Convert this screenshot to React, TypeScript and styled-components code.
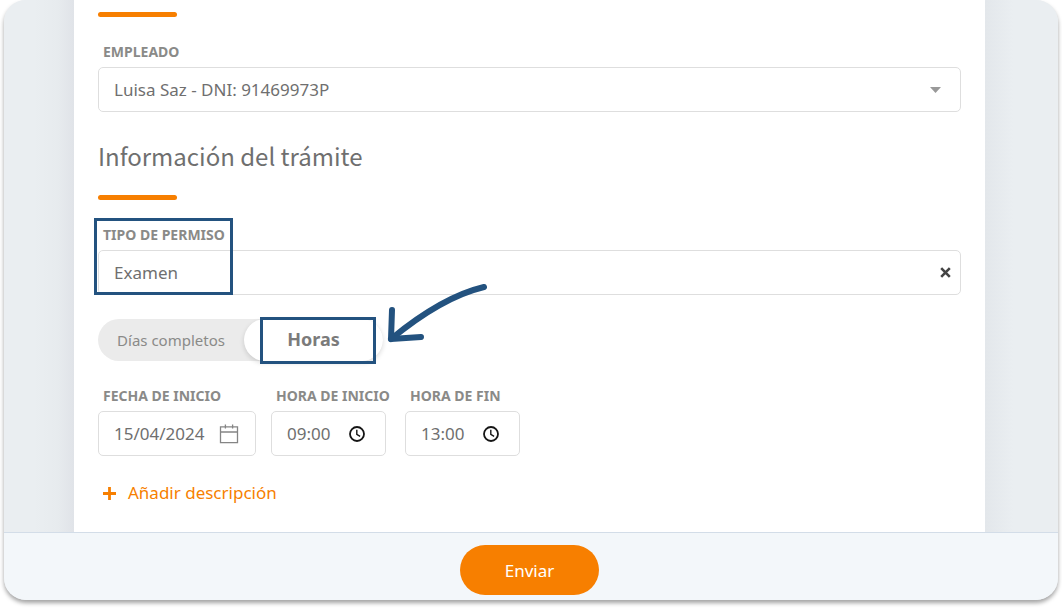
import React, { useState } from "react";
import styled, { createGlobalStyle } from "styled-components";

const ORANGE = "#f77f00";
const NAVY = "#23527f";
const LABEL = "#8a8a88";
const TEXT = "#6f6f6f";
const BORDER = "#dedede";

const GlobalStyle = createGlobalStyle`
  *, *::before, *::after { box-sizing: border-box; }
  body {
    margin: 0;
    background: #fff;
    color: ${TEXT};
    font-family: "Noto Sans", "Open Sans", sans-serif;
    font-size: 17px;
  }
  button, input, select { font: inherit; color: inherit; margin: 0; }
`;

const Frame = styled.div`
  margin: 0 4px 8px;
  border-radius: 22px;
  overflow: hidden;
  background: #eaeef1;
  box-shadow: 0 3px 4px rgba(0, 0, 0, 0.36);
`;

const Backdrop = styled.div`
  padding: 0 73px 0 70px;
  background: linear-gradient(
    to right,
    #eaeef1 30px,
    #e7ebee 54px,
    #e0e3e8 70px,
    #e3e7eb calc(100% - 73px),
    #eaeef1 calc(100% - 45px)
  );
`;

const Sheet = styled.main`
  padding: 12px 24px 27px;
  background: #fff;
`;

const Form = styled.form`
  margin: 0;
`;

const Bar = styled.div`
  width: 79px;
  height: 5px;
  border-radius: 3px;
  background: ${ORANGE};
`;

const Heading = styled.h2`
  margin: 26px 0 21px;
  font-family: "Noto Sans CJK SC", "Noto Sans", sans-serif;
  font-size: 24px;
  font-weight: 400;
  line-height: 36px;
`;

const Field = styled.div`
  position: relative;
  display: flex;
  flex-direction: column;
  gap: 4px;
  margin-top: 24px;
`;

const Label = styled.label`
  padding-left: 5px;
  color: ${LABEL};
  font-size: 14px;
  font-weight: 700;
  line-height: 22px;
  white-space: nowrap;
`;

const Control = styled.div<{ $width?: number; $end?: number }>`
  display: flex;
  align-items: center;
  width: ${(p) => (p.$width ? `${p.$width}px` : "100%")};
  height: 45px;
  padding: 0 ${(p) => p.$end ?? 16}px 0 15px;
  border: 1px solid ${BORDER};
  border-radius: 5px;
  background: #fff;
`;

const Select = styled.select`
  flex: 1;
  min-width: 0;
  height: 100%;
  padding: 0;
  border: 0;
  outline: 0;
  background: transparent;
  appearance: none;
`;

const TextInput = styled.input`
  flex: 1;
  min-width: 0;
  height: 100%;
  padding: 0;
  border: 0;
  outline: 0;
  background: transparent;
`;

const IconButton = styled.button`
  display: flex;
  padding: 0;
  border: 0;
  background: none;
  cursor: pointer;
`;

const Toggle = styled.div`
  position: relative;
  display: flex;
  width: 285px;
  height: 42px;
  margin-top: 24px;
  border-radius: 21px;
  background: #ebebeb;
`;

const HiddenRadio = styled.input`
  position: absolute;
  opacity: 0;
`;

const Option = styled.label<{ $active: boolean }>`
  display: flex;
  flex: ${(p) => (p.$active ? "0 0 139px" : "1")};
  align-items: center;
  justify-content: center;
  padding-bottom: ${(p) => (p.$active ? 3 : 0)}px;
  border-radius: 21px;
  background: ${(p) => (p.$active ? "#fff" : "transparent")};
  box-shadow: ${(p) => (p.$active ? "0 2px 5px rgba(0, 0, 0, 0.14)" : "none")};
  color: ${(p) => (p.$active ? "#7b7b7b" : LABEL)};
  font-size: ${(p) => (p.$active ? 18 : 15)}px;
  font-weight: ${(p) => (p.$active ? 700 : 400)};
  cursor: pointer;
`;

const TimeRow = styled.div`
  display: grid;
  grid-template-columns: 158px 119px 115px;
  gap: 15px;
`;

const AddLink = styled.button`
  display: flex;
  align-items: center;
  gap: 12px;
  margin-top: 25px;
  padding: 0 0 0 5px;
  border: 0;
  background: none;
  color: ${ORANGE};
  line-height: 24px;
  cursor: pointer;
`;

const Footer = styled.footer`
  display: flex;
  justify-content: center;
  padding: 12px 3px 5px 0;
  border-top: 1px solid #d3dde8;
  background: #f3f7fa;
`;

const Submit = styled.button`
  width: 139px;
  height: 50px;
  border: 0;
  border-radius: 25px;
  background: ${ORANGE};
  color: #fff;
  cursor: pointer;
`;

const Highlight = styled.span<{ $left: number; $top: number; $width: number; $height: number }>`
  position: absolute;
  left: ${(p) => p.$left}px;
  top: ${(p) => p.$top}px;
  width: ${(p) => p.$width}px;
  height: ${(p) => p.$height}px;
  border: 3px solid ${NAVY};
  pointer-events: none;
`;

const Arrow = styled.svg`
  position: absolute;
  left: 287px;
  top: -39px;
  pointer-events: none;
`;

const CalendarIcon = () => (
  <svg width="20" height="20" viewBox="0 0 20 20" fill="none" stroke="#858585" strokeWidth="1.3">
    <path d="M1.5 2.8h17v15.9h-17zM1.5 8h17M6.4 .5v4M13.6 .5v4" />
  </svg>
);

const ClockIcon = () => (
  <svg width="16" height="16" viewBox="0 0 16 16" fill="none" stroke="#151515">
    <circle cx="8" cy="8" r="7" strokeWidth="1.8" />
    <path d="M7.8 3.8v4.5l3.3 2" strokeWidth="1.4" />
  </svg>
);

type TimeFieldProps = { id: string; label: string; initial: string };

const TimeField = ({ id, label, initial }: TimeFieldProps) => (
  <Field>
    <Label htmlFor={id}>{label}</Label>
    <Control $width={115} $end={20}>
      <TextInput id={id} defaultValue={initial} />
      <IconButton type="button" aria-label={`Elegir ${label.toLowerCase()}`}>
        <ClockIcon />
      </IconButton>
    </Control>
  </Field>
);

export default function App() {
  const [mode, setMode] = useState("horas");
  const [permit, setPermit] = useState("Examen");

  return (
    <>
      <GlobalStyle />
      <Frame>
        <Backdrop>
          <Sheet>
            <Form id="tramite" onSubmit={(e) => e.preventDefault()}>
              <Bar />
              <Field>
                <Label htmlFor="empleado">EMPLEADO</Label>
                <Control $end={19}>
                  <Select id="empleado">
                    <option>Luisa Saz - DNI: 91469973P</option>
                  </Select>
                  <svg width="11" height="6" viewBox="0 0 11 6">
                    <path d="M0 0h11L5.5 6z" fill="#999" />
                  </svg>
                </Control>
              </Field>

              <Heading>Información del trámite</Heading>
              <Bar />

              <Field>
                <Label htmlFor="permiso">TIPO DE PERMISO</Label>
                <Control $end={9}>
                  <TextInput id="permiso" value={permit} onChange={(e) => setPermit(e.target.value)} />
                  <IconButton type="button" aria-label="Borrar" onClick={() => setPermit("")}>
                    <svg width="11" height="11" viewBox="0 0 11 11" stroke="#444" strokeWidth="2.6">
                      <path d="M1.2 1.2l8.6 8.6M9.8 1.2L1.2 9.8" />
                    </svg>
                  </IconButton>
                </Control>
                <Highlight $left={-4} $top={-6} $width={139} $height={77} />
              </Field>

              <Toggle role="radiogroup" aria-label="Duración">
                <Option $active={mode === "dias"}>
                  <HiddenRadio type="radio" name="modo" checked={mode === "dias"} onChange={() => setMode("dias")} />
                  Días completos
                </Option>
                <Option $active={mode === "horas"}>
                  <HiddenRadio type="radio" name="modo" checked={mode === "horas"} onChange={() => setMode("horas")} />
                  Horas
                </Option>
                <Highlight $left={162} $top={-2} $width={116} $height={47} />
                <Arrow width="110" height="70" viewBox="0 0 110 70" fill="none" stroke={NAVY} strokeWidth="6" strokeLinecap="round" strokeLinejoin="round">
                  <path d="M99 7Q57 17 6 59" />
                  <path d="M7 30L6 59L36 57" />
                </Arrow>
              </Toggle>

              <TimeRow>
                <Field>
                  <Label htmlFor="fecha">FECHA DE INICIO</Label>
                  <Control>
                    <TextInput id="fecha" defaultValue="15/04/2024" />
                    <IconButton type="button" aria-label="Abrir calendario">
                      <CalendarIcon />
                    </IconButton>
                  </Control>
                </Field>
                <TimeField id="hora-inicio" label="HORA DE INICIO" initial="09:00" />
                <TimeField id="hora-fin" label="HORA DE FIN" initial="13:00" />
              </TimeRow>

              <AddLink type="button">
                <svg width="13" height="13" viewBox="0 0 13 13" stroke={ORANGE} strokeWidth="2.8">
                  <path d="M6.5 0v13M0 6.5h13" />
                </svg>
                Añadir descripción
              </AddLink>
            </Form>
          </Sheet>
        </Backdrop>
        <Footer>
          <Submit type="submit" form="tramite">Enviar</Submit>
        </Footer>
      </Frame>
    </>
  );
}
